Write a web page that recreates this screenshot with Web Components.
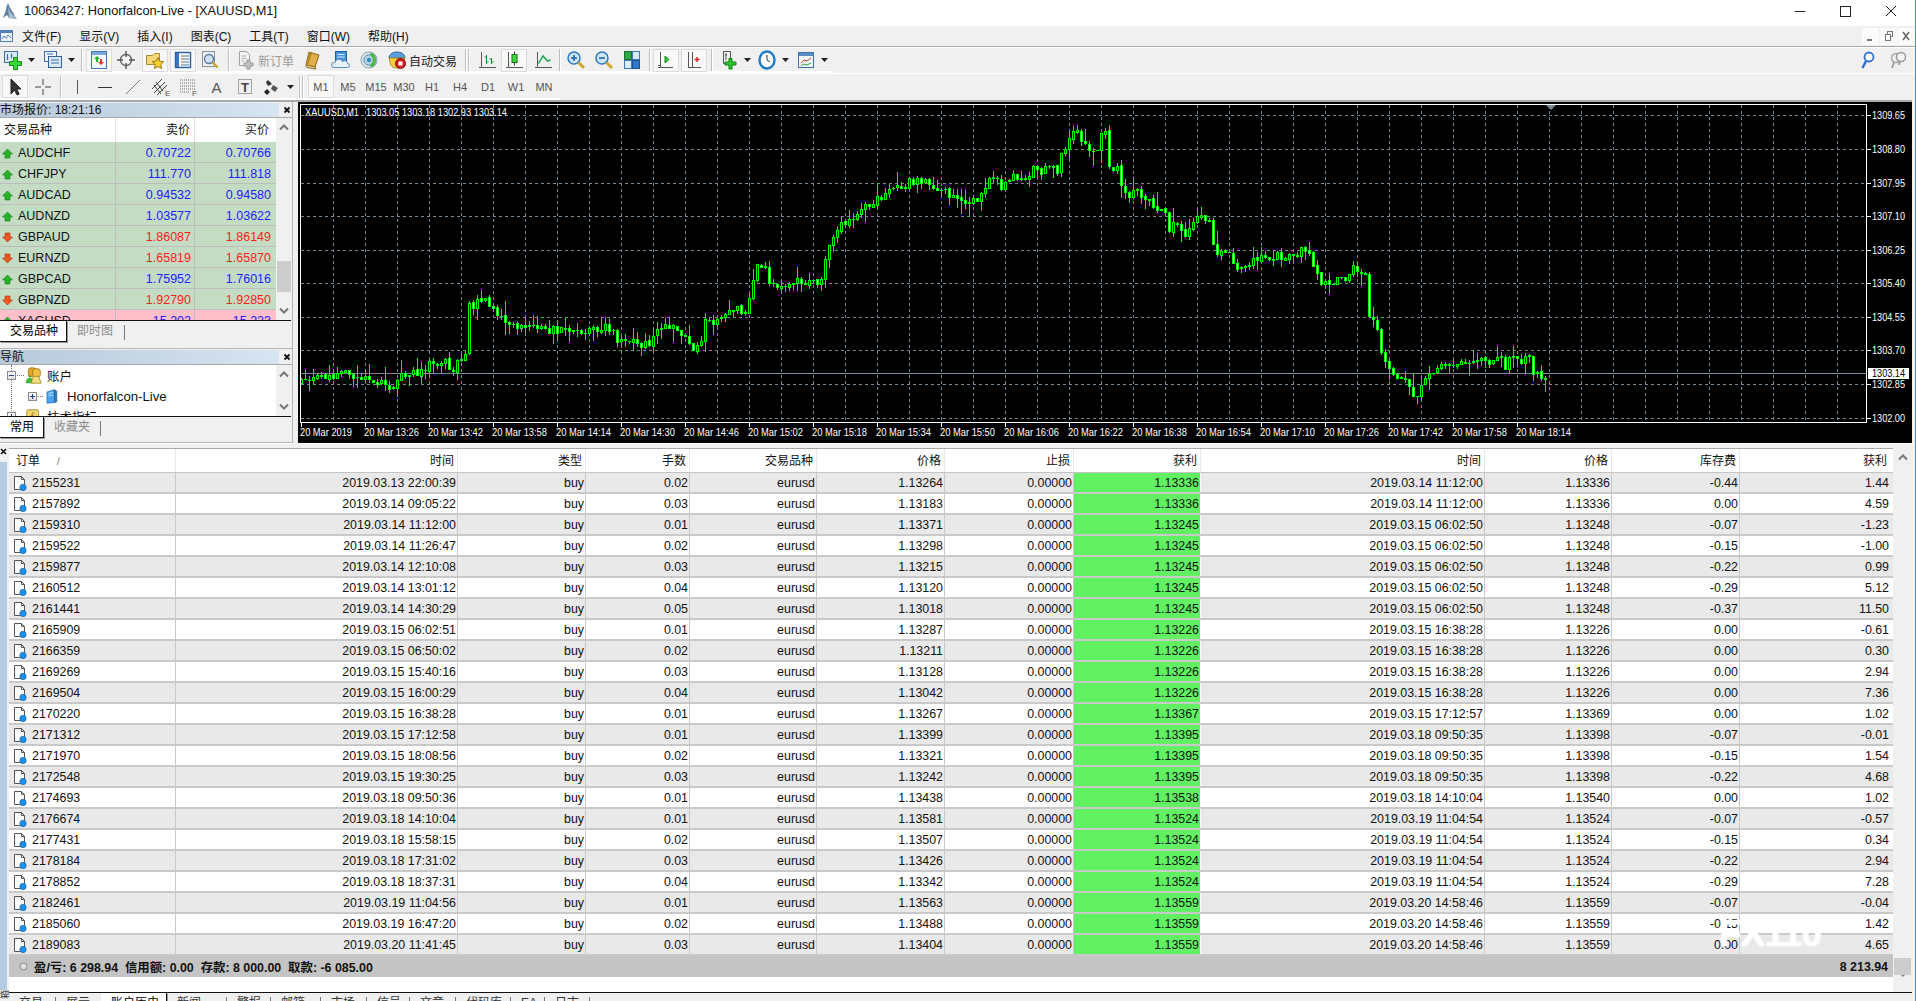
<!DOCTYPE html>
<html lang="zh">
<head>
<meta charset="utf-8">
<title>10063427: Honorfalcon-Live - [XAUUSD,M1]</title>
<style>
  html, body { margin: 0; padding: 0; width: 1916px; height: 1001px; overflow: hidden; background: #f0f0f0; }
  body { font: 12px "Liberation Sans", "Noto Sans CJK SC", sans-serif; color: #000; display: flex; flex-direction: column; box-sizing: border-box; border-right: 1px solid #3f8fb0; }
  .main { display: flex; height: 343px; flex: none; }
</style>
</head>
<body>
<title-bar></title-bar>
<menu-bar></menu-bar>

<tool-row band="833">
  <tool-btn icon="newchart" w="26"></tool-btn><tool-btn icon="drop" w="10"></tool-btn><tool-btn w="4"></tool-btn>
  <tool-btn icon="profiles" w="26"></tool-btn><tool-btn icon="drop" w="10"></tool-btn><tool-btn icon="sep" w="10"></tool-btn>
  <tool-btn icon="market" w="26" active></tool-btn><tool-btn icon="target" w="28"></tool-btn><tool-btn w="2"></tool-btn>
  <tool-btn icon="fav" w="26" active></tool-btn><tool-btn w="2"></tool-btn>
  <tool-btn icon="navi" w="26" active></tool-btn><tool-btn icon="tester" w="28"></tool-btn><tool-btn icon="sep" w="8"></tool-btn>
  <tool-btn icon="neworder" w="67" label="新订单" muted></tool-btn>
  <tool-btn icon="book" w="28"></tool-btn><tool-btn icon="cloud" w="28"></tool-btn><tool-btn icon="signal" w="28"></tool-btn>
  <tool-btn icon="auto" w="78" label="自动交易"></tool-btn><tool-btn icon="grip" w="12"></tool-btn>
  <tool-btn icon="bars" w="28"></tool-btn><tool-btn icon="candle" w="26" active></tool-btn><tool-btn w="2"></tool-btn><tool-btn icon="line" w="28"></tool-btn>
  <tool-btn icon="sep" w="5"></tool-btn>
  <tool-btn icon="zoomin" w="28"></tool-btn><tool-btn icon="zoomout" w="28"></tool-btn><tool-btn icon="tile" w="28"></tool-btn>
  <tool-btn icon="sep" w="7"></tool-btn>
  <tool-btn icon="shift" w="26" active></tool-btn><tool-btn w="2"></tool-btn><tool-btn icon="scroll" w="26" active></tool-btn><tool-btn icon="sep" w="8"></tool-btn>
  <tool-btn icon="indicator" w="28"></tool-btn><tool-btn icon="drop" w="8"></tool-btn><tool-btn w="2"></tool-btn>
  <tool-btn icon="clock" w="28"></tool-btn><tool-btn icon="drop" w="8"></tool-btn><tool-btn w="3"></tool-btn>
  <tool-btn icon="template" w="28"></tool-btn><tool-btn icon="drop" w="8"></tool-btn>
  <tool-btn icon="find" w="26" style="margin-left:auto"></tool-btn><tool-btn icon="talk" w="32"></tool-btn><tool-btn w="2"></tool-btn>
</tool-row>

<tool-row band="560">
  <tool-btn w="2"></tool-btn><tool-btn icon="cursor" w="26" active></tool-btn>
  <tool-btn icon="cross" w="29"></tool-btn><tool-btn icon="sep" w="6"></tool-btn>
  <tool-btn icon="vline" w="28"></tool-btn><tool-btn icon="hline" w="28"></tool-btn><tool-btn icon="trend" w="28"></tool-btn>
  <tool-btn icon="channel" w="28"></tool-btn><tool-btn icon="fibo" w="28"></tool-btn><tool-btn icon="atext" w="28"></tool-btn>
  <tool-btn icon="ttext" w="28"></tool-btn><tool-btn icon="arrows" w="26"></tool-btn><tool-btn icon="drop" w="10"></tool-btn>
  <tool-btn icon="grip" w="12"></tool-btn><tool-btn w="1"></tool-btn>
  <tool-btn label="M1" w="26" active></tool-btn>
  <tool-btn label="M5" w="28"></tool-btn><tool-btn label="M15" w="28"></tool-btn><tool-btn label="M30" w="28"></tool-btn>
  <tool-btn label="H1" w="28"></tool-btn><tool-btn label="H4" w="28"></tool-btn><tool-btn label="D1" w="28"></tool-btn>
  <tool-btn label="W1" w="28"></tool-btn><tool-btn label="MN" w="28"></tool-btn>
</tool-row>

<div class="main">
  <side-panels></side-panels>
  <price-chart></price-chart>
</div>

<trade-history></trade-history>

<script>
  // toolbar + tree icons, all on a 20x20 box
  const ICONS = {
    newchart: `<rect x="1.5" y="1.5" width="13" height="11" fill="#dbe8f8" stroke="#3f6fa8"/><path d="M4.5 4v6M3.5 8h2M8.5 3.5v5M7.5 6h2" stroke="#3f6fa8" fill="none"/><path d="M10.5 7.5h4v4h4v4h-4v4h-4v-4h-4v-4h4z" fill="#37d637" stroke="#178a17"/>`,
    profiles: `<rect x="1.5" y="1.5" width="12" height="10" fill="#eef3fa" stroke="#3f6fa8"/><rect x="5.5" y="6.5" width="13" height="11" fill="#dbe8f8" stroke="#2f5f9c"/><path d="M4 4h6M8 10h8M8 13h8" stroke="#3f6fa8"/>`,
    market: `<rect x="2.5" y="1.5" width="15" height="17" fill="#f5f9ff" stroke="#3f78b8"/><path d="M3 2h14v3H3z" fill="#7fa8d8"/><path d="M8 6l3 3H9v3H7V9H5z" fill="#20b020"/><path d="M12 15l-3-3h2V9h2v3h2z" fill="#e8402a"/>`,
    target: `<circle cx="10" cy="10" r="5.5" fill="#f4f4f4" stroke="#666" stroke-width="1.4"/><path d="M10 1v6M10 13v6M1 10h6M13 10h6" stroke="#555" stroke-width="1.4"/>`,
    fav: `<path d="M1.5 5.5h6l2-2h5v11h-13z" fill="#f6d777" stroke="#a88a2a"/><path d="M13 7.5l1.8 3.7 4 .5-3 2.8.8 4-3.6-2-3.6 2 .8-4-3-2.8 4-.5z" fill="#f8d030" stroke="#9a7a10"/>`,
    navi: `<rect x="2.5" y="2.5" width="15" height="15" fill="#f5f9ff" stroke="#2a5f9e" stroke-width="1.4"/><path d="M3 3h3v14H3z" fill="#3a78c0"/><path d="M8 6h8M8 9h8M8 12h8M8 15h8" stroke="#5a7aa0"/><path d="M4 6h1M4 10h1M4 14h1" stroke="#e03030"/>`,
    tester: `<rect x="2.5" y="1.5" width="12" height="15" fill="#eef0f2" stroke="#8a9098"/><circle cx="9" cy="9" r="4.5" fill="#cfe2f3" stroke="#5a7a98" stroke-width="1.3"/><path d="M12.5 12.5l5 5" stroke="#c9a227" stroke-width="2.4"/>`,
    neworder: `<path d="M3.5 1.5h7l3 3v11h-10z" fill="#f3f3f3" stroke="#a0a0a0"/><path d="M5.5 6h5M5.5 8.500h5M5.5 11h3" stroke="#b0b0b0"/><path d="M11 10h3v3h3v3h-3v3h-3v-3H8v-3h3z" fill="#c0c0c0" stroke="#989898"/>`,
    book: `<path d="M6 2l10 3-4 12-9-2z" fill="#e2b04a" stroke="#8a6414"/><path d="M3 15l1 2.500 9 1.500-1-2z" fill="#f5e7c0" stroke="#8a6414"/><path d="M6 2l3 1-4 12.600-2-.6z" fill="#b98624"/>`,
    cloud: `<rect x="4.500" y="1.500" width="11" height="12" fill="#4a94dc" stroke="#1f5fa8"/><path d="M6.500 4.500h7M6.500 7h7" stroke="#d8ecff"/><path d="M3 17.500a2.500 2.500 0 0 1 0-5h1a4 4 0 0 1 7.500-1 3 3 0 0 1 5 2 2 2 0 0 1 0 4z" fill="#e8f2fb" stroke="#5a8cbc"/>`,
    signal: `<circle cx="10" cy="10" r="8" fill="#dfe8ee" stroke="#8aa0b0"/><circle cx="10" cy="10" r="5.200" fill="#b8d4e4" stroke="#5a90b0"/><circle cx="10" cy="10" r="2.200" fill="#3f88b8"/><path d="M12 2.500a8 8 0 0 1 0 15l-1-3a5 5 0 0 0 0-9z" fill="#4cb84c"/>`,
    auto: `<path d="M2 8c0-4 4-6 8-6s8 2 8 6z" fill="#5aa0dc" stroke="#2f6aa0"/><path d="M2.500 8h15c0 6-3 10-8 10s-7-4-7-10z" fill="#f6d040" stroke="#a88a20"/><circle cx="13.500" cy="13.500" r="5" fill="#d81e1e" stroke="#7a1010"/><rect x="11.500" y="11.500" width="4" height="4" fill="#fff"/>`,
    bars: `<path d="M4.500 2v15.500H19M2 17.500h2" stroke="#555" fill="none"/><path d="M9.500 5v9M7.500 7h2M9.500 12h2M14.500 8v6M12.500 9h2M14.500 12h2" stroke="#0f8f3a" fill="none"/>`,
    candle: `<path d="M4.500 2v15.500H19M2 17.500h2" stroke="#555" fill="none"/><path d="M10.500 1.500v14" stroke="#333"/><rect x="8" y="4.500" width="5" height="8" fill="#3ad83a" stroke="#136f13"/>`,
    line: `<path d="M4.500 2v15.500H19M2 17.500h2" stroke="#555" fill="none"/><path d="M5.500 13.500L10 6l4.500 5 3-1" stroke="#0f9f4a" stroke-width="1.400" fill="none"/>`,
    zoomin: `<circle cx="8" cy="8" r="6" fill="#cfe6fa" stroke="#2f78c0" stroke-width="1.500"/><path d="M5 8h6M8 5v6" stroke="#1f5fa8" stroke-width="1.600"/><path d="M12.500 12.500l5.500 5.500" stroke="#d0a828" stroke-width="3"/>`,
    zoomout: `<circle cx="8" cy="8" r="6" fill="#cfe6fa" stroke="#2f78c0" stroke-width="1.500"/><path d="M5 8h6" stroke="#1f5fa8" stroke-width="1.600"/><path d="M12.500 12.500l5.500 5.500" stroke="#d0a828" stroke-width="3"/>`,
    tile: `<rect x="2.500" y="1.500" width="7" height="8" fill="#2fa84a" stroke="#1a7030"/><rect x="10.500" y="1.500" width="7" height="8" fill="#dceaf8" stroke="#3f78b8"/><rect x="2.500" y="10.500" width="7" height="8" fill="#dceaf8" stroke="#3f78b8"/><rect x="10.500" y="10.500" width="7" height="8" fill="#2f78c8" stroke="#1f4f90"/>`,
    shift: `<path d="M4.500 2v15.500H17M2 15.500h2M2 17.500h2" stroke="#555" fill="none"/><path d="M9 6l4 3.500L9 13z" fill="#38c838" stroke="#178a17"/>`,
    scroll: `<path d="M4.500 2v15.500H17M8.500 2v15.500" stroke="#555" fill="none"/><path d="M13 7v5M10.500 9.500h5" stroke="#d02020" stroke-width="1.400"/>`,
    indicator: `<path d="M4.500 1.500h7v12h-7z" fill="#f2f2f2" stroke="#555"/><path d="M7 3v7M6 5h2" stroke="#555"/><path d="M10 8.500h3v3.500h4v3h-4v4h-3v-4H6v-3h4z" fill="#28c828" stroke="#128012"/>`,
    clock: `<ellipse cx="10" cy="10" rx="7.500" ry="8.500" fill="#fff" stroke="#1f78c8" stroke-width="2.400"/><path d="M10 5v5l3 2" stroke="#333" fill="none"/>`,
    template: `<rect x="2.500" y="2.500" width="15" height="15" fill="#f2f6fb" stroke="#3f6fa8"/><path d="M3 3h14v3H3z" fill="#5a8cc8"/><path d="M5 13l3-3 3 1 4-3" stroke="#d04020" fill="none"/><path d="M5 16l3-2 3 1 4-2" stroke="#20a040" fill="none"/>`,
    find: `<circle cx="11" cy="7" r="4.500" fill="#fff" stroke="#2f6fd0" stroke-width="1.800"/><path d="M8 11l-3.500 7" stroke="#2f6fd0" stroke-width="2.400"/>`,
    talk: `<circle cx="9" cy="8" r="4.500" fill="#eee" stroke="#a8a8a8" stroke-width="1.500"/><circle cx="14" cy="7" r="4.500" fill="#f6f6f6" stroke="#989898" stroke-width="1.500"/><path d="M7 12l-2 6M13 11l-1 4" stroke="#a0a0a0" stroke-width="2"/>`,
    cursor: `<path d="M6 2v15l3.500-4 2.500 5 2.200-1-2.500-5H16z" fill="#333" stroke="#222"/>`,
    cross: `<path d="M10 2v6M10 12v6M2 10h6M12 10h6" stroke="#444"/>`,
    vline: `<path d="M10.500 3v14" stroke="#555"/>`,
    hline: `<path d="M3 10.500h14" stroke="#333"/>`,
    trend: `<path d="M3 17L17 3" stroke="#777"/>`,
    channel: `<path d="M1 12L11 2M3 16L14 5M6 18L16 8M5 5l7 9M3 8l7 9" stroke="#444" fill="none"/><text x="14" y="18.500" font-size="8" font-family="Liberation Sans" fill="#555">E</text>`,
    fibo: `<path d="M1 3h15M1 6h15M1 9h15M1 12h15M1 15h10" stroke="#666" stroke-dasharray="1 1"/><text x="13" y="18.500" font-size="8" font-family="Liberation Sans" fill="#555">F</text>`,
    atext: `<text x="4.500" y="16" font-size="15" font-family="Liberation Sans" fill="#555">A</text>`,
    ttext: `<rect x="3.500" y="2.500" width="13" height="14" fill="none" stroke="#555" stroke-dasharray="1 1"/><text x="6" y="15" font-size="13" font-weight="bold" font-family="Liberation Sans" fill="#444">T</text>`,
    arrows: `<path d="M6 3l4 4-4 2-2-4z" fill="#333"/><path d="M11 8l5 3-3 4-4-3z" fill="#555"/><path d="M5 12l3 3-3 3-3-3z" fill="#222"/>`,
    accounts: `<circle cx="6" cy="10" r="2.500" fill="#3fb83f"/><path d="M1 19c0-5 2-6 5-6s5 1 5 6z" fill="#3fb83f"/><rect x="4" y="1" width="9" height="10" rx="3" fill="#e0a828" stroke="#a0741a"/><rect x="9" y="2" width="9" height="10" rx="3" fill="#f0c040" stroke="#a0741a"/><path d="M7 19l3-8h6l3 8z" fill="#f4dc80" stroke="#a88a20"/>`,
    server: `<path d="M4 4l10-3v17l-10 1z" fill="#49a4ea" stroke="#1f6fb8"/><path d="M14 1l3 2v14l-3 1z" fill="#2f78c0" stroke="#1f5f9f"/><path d="M6 6l6-1.500M6 9l6-1" stroke="#d6eeff"/>`,
    fbook: `<rect x="2" y="2" width="14" height="15" rx="2" fill="#f2d46e" stroke="#a8882a"/><text x="6.500" y="14" font-size="11" font-style="italic" font-family="Liberation Serif" fill="#8a6a10">f</text>`
  };

  const iconSvg = (name, size = 20) =>
    `<svg width="${size}" height="${size}" viewBox="0 0 20 20" aria-hidden="true">${ICONS[name] || ""}</svg>`;

  const chevron = (up) =>
    `<svg width="12" height="8" viewBox="0 0 12 8"><path d="${up ? "M2 6.500L6 2.500l4 4" : "M2 1.500L6 5.500l4-4"}" fill="none" stroke="#777" stroke-width="2"/></svg>`;

  class TitleBar extends HTMLElement {
    connectedCallback() {
      if (!this.shadowRoot) this.attachShadow({ mode: "open" });
      this.shadowRoot.innerHTML = `
        <style>
          :host { display: flex; align-items: center; height: 26px; flex: none; background: #fff; font: 12.750px "Liberation Sans", sans-serif; color: #111; }
          .logo { margin: 0 7px 4px 3px; }
          .title { flex: 1; margin-bottom: 5px; }
          .btns { display: flex; margin-bottom: 4px; margin-right: 2px; }
          .btns svg { width: 45px; height: 14px; display: block; }
        </style>
        <svg class="logo" width="14" height="17" viewBox="0 0 14 17"><path d="M5 0c-1 3-2 4-2 7L0 15l4-3 2 3 8 1c-3-3-3-6-5-8C7 5 6 3 5 0z" fill="#5f7f9f"/><path d="M5 3c1 4 2 6 5 9l3 4-7-1z" fill="#a9bdd0"/></svg>
        <span class="title">10063427: Honorfalcon-Live - [XAUUSD,M1]</span>
        <div class="btns">
          <svg viewBox="0 0 45 14"><path d="M17 7.500h10" stroke="#222"/></svg>
          <svg viewBox="0 0 45 14"><rect x="17.500" y="2.500" width="10" height="10" fill="none" stroke="#222"/></svg>
          <svg viewBox="0 0 45 14"><path d="M18 2l10 10M28 2L18 12" stroke="#222" fill="none"/></svg>
        </div>
      `;
    }
  }
  customElements.define("title-bar", TitleBar);

  class MenuBar extends HTMLElement {
    connectedCallback() {
      if (!this.shadowRoot) this.attachShadow({ mode: "open" });
      const items = ["文件(F)", "显示(V)", "插入(I)", "图表(C)", "工具(T)", "窗口(W)", "帮助(H)"];
      this.shadowRoot.innerHTML = `
        <style>
          :host { display: flex; align-items: center; height: 20px; flex: none; background: #f0f0f0; color: #111; font: 12px "Liberation Sans", "Noto Sans CJK SC", sans-serif; }
          .doc { width: 22px; flex: none; display: flex; }
          nav { display: flex; gap: 18px; flex: 1; padding-bottom: 2px; }
          .mdi { display: flex; gap: 1px; }
          .mdi svg { display: block; background: #fbfbfb; }
        </style>
        <div class="doc"><svg width="14" height="14" viewBox="0 0 14 14"><rect x="0.500" y="1.500" width="12" height="11" fill="#eef4fc" stroke="#4f80b8"/><path d="M1 2h11v2H1z" fill="#4f80b8"/><path d="M2 10l2-3 2 2 2-3 3 3" fill="none" stroke="#4f80b8"/></svg></div>
        <nav>${items.map((m) => `<span>${m}</span>`).join("")}</nav>
        <div class="mdi">
          <svg width="17" height="17" viewBox="0 0 17 17"><rect x="5" y="11" width="5" height="2" fill="#777"/></svg>
          <svg width="17" height="17" viewBox="0 0 17 17"><rect x="7.500" y="3.500" width="5" height="5" fill="none" stroke="#777"/><rect x="5.500" y="6.500" width="5" height="6" fill="#fbfbfb" stroke="#777"/></svg>
          <svg width="17" height="17" viewBox="0 0 17 17"><path d="M5 4l6 8M11 4l-6 8" stroke="#666" stroke-width="1.500"/></svg>
        </div>
      `;
    }
  }
  customElements.define("menu-bar", MenuBar);

  class ToolRow extends HTMLElement {
    connectedCallback() {
      if (!this.shadowRoot) this.attachShadow({ mode: "open" });
      this.shadowRoot.innerHTML = `
        <style>
          :host {
            display: flex; align-items: center; height: 27px; flex: none; box-sizing: border-box;
            border-top: 1px solid #a9a9a9; padding-top: 1px; padding-bottom: 1px;
            background:
              linear-gradient(#fff, #fff) 0 100% / ${this.getAttribute("band")}px 2px no-repeat,
              linear-gradient(#fff, #fff) 0 0 / 100% 1px no-repeat,
              #f0f0f0;
          }
          :host(:nth-of-type(2)) { border-top: 0; }
        </style>
        <slot></slot>
      `;
    }
  }
  customElements.define("tool-row", ToolRow);

  class ToolBtn extends HTMLElement {
    connectedCallback() {
      if (!this.shadowRoot) this.attachShadow({ mode: "open" });
      const icon = this.getAttribute("icon");
      const label = this.getAttribute("label");
      const w = this.getAttribute("w");
      let face = "";
      if (icon === "drop") face = `<svg width="7" height="4" viewBox="0 0 7 4"><path d="M0 0h7L3.500 4z" fill="#222"/></svg>`;
      else if (icon === "sep") face = `<i class="sep"></i>`;
      else if (icon === "grip") face = `<i class="sep"></i><i class="sep"></i>`;
      else if (icon) face = iconSvg(icon);
      this.shadowRoot.innerHTML = `
        <style>
          :host { display: flex; flex: none; align-items: center; justify-content: center; box-sizing: border-box; width: ${w}px; height: 23px; gap: 2px; font: 12px "Liberation Sans", "Noto Sans CJK SC", sans-serif; color: #222; }
          :host([active]) { background: #f8f8f8; border: 1px solid #dcdcdc; }
          :host([muted]) { color: #9a9a9a; }
          :host([label][icon]) { justify-content: flex-start; padding-left: 4px; }
          .sep { width: 1px; height: 22px; background: #bdbdbd; box-shadow: 1px 0 #fff; }
          span { white-space: nowrap; }
          :host([label]:not([icon])) span { color: #555; font-size: 11px; }
          svg { flex: none; display: block; }
        </style>
        ${face}${label ? `<span>${label}</span>` : ""}
      `;
    }
  }
  customElements.define("tool-btn", ToolBtn);

  class PanelHead extends HTMLElement {
    connectedCallback() {
      if (!this.shadowRoot) this.attachShadow({ mode: "open" });
      this.shadowRoot.innerHTML = `
        <style>
          :host { display: flex; align-items: center; height: 14px; flex: none; font: 12px/14px "Liberation Sans", "Noto Sans CJK SC", sans-serif; color: #111; }
          .t { width: 279px; flex: none; height: 14px; background: linear-gradient(90deg, #b7c9db, #d7e4f1); white-space: nowrap; }
          svg { margin-left: 4px; }
        </style>
        <div class="t"><slot></slot></div>
        <svg width="9" height="9" viewBox="0 0 9 9"><path d="M1.500 1.500l5 5M6.500 1.500l-5 5" stroke="#111" stroke-width="1.800"/></svg>
      `;
    }
  }
  customElements.define("panel-head", PanelHead);

  class TabStrip extends HTMLElement {
    connectedCallback() {
      if (!this.shadowRoot) this.attachShadow({ mode: "open" });
      this.shadowRoot.innerHTML = `
        <style>
          :host { display: flex; flex: none; box-sizing: border-box; border-top: 1px solid #111; background: #f0f0f0; overflow: hidden; }
        </style>
        <slot></slot>
      `;
    }
  }
  customElements.define("tab-strip", TabStrip);

  class TabItem extends HTMLElement {
    connectedCallback() {
      if (!this.shadowRoot) this.attachShadow({ mode: "open" });
      const w = this.getAttribute("w");
      this.shadowRoot.innerHTML = `
        <style>
          :host { display: block; flex: none; box-sizing: border-box; width: ${w}px; height: 21px; padding-left: 10px; font: 12px/21px "Liberation Sans", "Noto Sans CJK SC", sans-serif; color: #333; white-space: nowrap; position: relative; }
          :host([muted]) { color: #8c8c8c; }
          :host([active]) { background: #fff; color: #000; border-right: 1px solid #111; border-bottom: 1px solid #111; box-shadow: 1px 1px 0 #999; }
          :host([sep])::after { content: ""; position: absolute; right: 0; top: 4px; height: 15px; width: 1px; background: #777; }
        </style>
        <slot></slot>
      `;
    }
  }
  customElements.define("tab-item", TabItem);

  class ScrollRail extends HTMLElement {
    connectedCallback() {
      if (!this.shadowRoot) this.attachShadow({ mode: "open" });
      this.shadowRoot.innerHTML = `
        <style>
          :host { display: flex; flex-direction: column; align-items: center; justify-content: space-between; flex: none; box-sizing: border-box; background: #f0f0f0; padding: 5px 0; position: relative; }
          .thumb { position: absolute; left: 1px; right: 1px; background: #cdcdcd; }
        </style>
        ${chevron(true)}
        <div class="thumb" style="top:${this.getAttribute("thumb-top") || 0}px;height:${this.getAttribute("thumb") || 0}px"></div>
        ${chevron(false)}
      `;
    }
  }
  customElements.define("scroll-rail", ScrollRail);

  class QuoteRow extends HTMLElement {
    connectedCallback() {
      if (!this.shadowRoot) this.attachShadow({ mode: "open" });
      const dir = this.getAttribute("dir-tick");
      const up = dir === "up";
      const colour = this.hasAttribute("pink") ? "#1a1aff" : up ? "#2222ff" : "#ff1a1a";
      this.shadowRoot.innerHTML = `
        <style>
          :host { display: grid; grid-template-columns: 116px 79px 80px; height: 21px; flex: none; box-sizing: border-box; background: ${this.hasAttribute("pink") ? "#ffc0cb" : "#c4dcc4"}; border-bottom: 1px solid #bdbdbd; font: 12.500px/22px "Liberation Sans", sans-serif; }
          div { box-sizing: border-box; border-right: 1px solid #bdbdbd; white-space: nowrap; height: 20px; }
          .sym { display: flex; align-items: center; gap: 5px; padding-left: 2px; padding-top: 2px; line-height: 18px; color: #111; }
          .n { text-align: right; padding-right: 3px; color: ${colour}; }
          .n:last-child { border-right: 0; padding-right: 4px; }
          svg { flex: none; }
        </style>
        <div class="sym">
          <svg width="11" height="11" viewBox="0 0 11 11"><path d="${up ? "M5.500 1l5 5H8v4H3V6H.5z" : "M5.500 10l5-5H8V1H3v4H.5z"}" fill="${up ? "#27b327" : "#f0561e"}" stroke="${up ? "#167a16" : "#a83210"}" stroke-width=".6"/></svg>
          <span>${this.getAttribute("sym")}</span>
        </div>
        <div class="n">${this.getAttribute("bid")}</div>
        <div class="n">${this.getAttribute("ask")}</div>
      `;
    }
  }
  customElements.define("quote-row", QuoteRow);

  class SidePanels extends HTMLElement {
    connectedCallback() {
      if (!this.shadowRoot) this.attachShadow({ mode: "open" });
      const quotes = [
        ["AUDCHF", "0.70722", "0.70766", "up"],
        ["CHFJPY", "111.770", "111.818", "up"],
        ["AUDCAD", "0.94532", "0.94580", "up"],
        ["AUDNZD", "1.03577", "1.03622", "up"],
        ["GBPAUD", "1.86087", "1.86149", "down"],
        ["EURNZD", "1.65819", "1.65870", "down"],
        ["GBPCAD", "1.75952", "1.76016", "up"],
        ["GBPNZD", "1.92790", "1.92850", "down"]
      ];
      this.shadowRoot.innerHTML = `
        <style>
          :host { display: flex; flex-direction: column; width: 298px; flex: none; box-sizing: border-box; height: 343px; border-top: 2px solid #a9a9a9; background: #f0f0f0; font: 12px "Liberation Sans", "Noto Sans CJK SC", sans-serif; }
          .wrap { width: 293px; box-sizing: border-box; border-right: 1px solid #b5b5b5; display: flex; flex-direction: column; flex: 1; border-bottom: 1px solid #b5b5b5; }
          panel-head { margin-top: 1px; }
          .rule { height: 1px; background: #a9a9a9; flex: none; }
          .market { display: flex; height: 202px; flex: none; overflow: hidden; }
          .quotes { width: 276px; flex: none; display: flex; flex-direction: column; }
          .head { display: grid; grid-template-columns: 116px 79px 80px; height: 24px; flex: none; background: #fff; line-height: 24px; font-size: 12px; color: #111; }
          .head div { padding: 0 4px; border-right: 1px solid #e4e4e4; }
          .head .r { text-align: right; padding-right: 4px; }
          .head .r:last-child { border-right: 0; padding-right: 6px; }
          scroll-rail { width: 16px; height: 100%; }
          tab-strip { height: 25px; margin-right: 1px; }
          .gap { height: 3px; flex: none; border-bottom: 1px solid #b5b5b5; }
          .tree { display: flex; height: 51px; flex: none; overflow: hidden; background: #fff; }
          .nodes { width: 276px; flex: none; color: #111; position: relative; }
          .node { display: flex; align-items: center; height: 20px; white-space: nowrap; }
          .node.n1 { margin-top: 1px; }
          .box { width: 9px; height: 9px; box-sizing: border-box; border: 1px solid #8a8a8a; background: linear-gradient(#fff, #dcdcdc); flex: none; position: relative; }
          .box::before { content: ""; position: absolute; left: 1px; right: 1px; top: 3px; height: 1px; background: #2a3f8a; }
          .box.plus::after { content: ""; position: absolute; top: 1px; bottom: 1px; left: 3px; width: 1px; background: #2a3f8a; }
          .dots { width: 7px; flex: none; border-top: 1px dotted #777; margin: 0 1px; }
          .n1 .dots { width: 5px; }
          .node svg { flex: none; }
          .n0 { padding-left: 7px; }
          .n1 { padding-left: 28px; }
          .lbl { margin-left: 5px; font-size: 12.500px; }
          .vline { position: absolute; left: 11px; top: 0; height: 50px; border-left: 1px dotted #777; }
          .tree scroll-rail { height: 51px; }
        </style>
        <div class="wrap">
          <panel-head>市场报价: 18:21:16</panel-head>
          <div class="rule"></div>
          <div class="market">
            <div class="quotes">
              <div class="head"><div>交易品种</div><div class="r">卖价</div><div class="r">买价</div></div>
              ${quotes.map((q) => `<quote-row sym="${q[0]}" bid="${q[1]}" ask="${q[2]}" dir-tick="${q[3]}"></quote-row>`).join("")}
              <quote-row sym="XAGUSD" bid="15.202" ask="15.223" dir-tick="up" pink></quote-row>
            </div>
            <scroll-rail thumb-top="143" thumb="31"></scroll-rail>
          </div>
          <tab-strip>
            <tab-item w="67" active>交易品种</tab-item>
            <tab-item w="58" muted sep>即时图</tab-item>
          </tab-strip>
          <div class="gap"></div>
          <panel-head>导航</panel-head>
          <div class="rule"></div>
          <div class="tree">
            <div class="nodes">
              <i class="vline"></i>
              <div class="node n0"><i class="box"></i><i class="dots"></i>${iconSvg("accounts", 17)}<span class="lbl">账户</span></div>
              <div class="node n1"><i class="box plus"></i><i class="dots"></i>${iconSvg("server", 15)}<span class="lbl" style="margin-left:8px;font-size:13.200px">Honorfalcon-Live</span></div>
              <div class="node n0"><i class="box plus"></i><i class="dots"></i>${iconSvg("fbook", 17)}<span class="lbl">技术指标</span></div>
            </div>
            <scroll-rail></scroll-rail>
          </div>
          <tab-strip>
            <tab-item w="44" active>常用</tab-item>
            <tab-item w="57" muted sep>收藏夹</tab-item>
          </tab-strip>
        </div>
      `;
    }
  }
  customElements.define("side-panels", SidePanels);

  // hand-read close prices (x, y in page pixels), bars get interpolated between them
  const PATH = [
    [301,383],[325,377],[341,371],[357,377],[373,379],[389,389],[397,383],[405,372],[417,372],[429,365],[445,363],[453,367],[457,360],[465,350],
    [469,307],[473,307],[481,299],[485,298],[489,310],[497,313],[509,320],[513,325],[529,325],[545,330],[565,330],[585,333],[593,327],[613,327],
    [617,338],[625,338],[633,336],[641,345],[653,340],[661,324],[669,325],[685,335],[693,347],[701,337],[705,322],[721,317],[729,310],[745,310],
    [749,295],[753,280],[757,263],[765,263],[769,283],[793,283],[805,282],[819,283],[825,262],[831,235],[840,225],[855,214],[870,205],[892,189],
    [905,183],[923,181],[935,187],[947,195],[960,197],[978,202],[987,185],[996,171],[1001,185],[1013,175],[1025,180],[1033,170],[1041,175],[1045,165],
    [1057,173],[1061,153],[1069,137],[1073,128],[1077,128],[1085,147],[1097,147],[1101,135],[1105,135],[1109,163],[1117,170],[1121,187],[1129,197],
    [1137,188],[1141,198],[1153,205],[1157,210],[1165,208],[1169,227],[1177,223],[1185,240],[1189,225],[1193,218],[1201,217],[1209,223],[1217,257],
    [1221,247],[1229,253],[1237,268],[1253,260],[1269,255],[1293,258],[1301,248],[1309,250],[1313,263],[1321,285],[1329,285],[1333,282],[1345,277],
    [1353,268],[1357,268],[1365,275],[1369,317],[1377,330],[1381,352],[1385,358],[1393,373],[1405,375],[1409,390],[1417,395],[1421,382],[1425,380],
    [1433,375],[1445,365],[1457,360],[1473,360],[1480,358],[1489,363],[1497,355],[1505,365],[1513,357],[1521,360],[1529,358],[1533,372],[1537,375],[1545,375]
  ];

  class PriceChart extends HTMLElement {
    connectedCallback() {
      if (!this.shadowRoot) this.attachShadow({ mode: "open" });
      this.render();
    }

    candles() {
      let seed = 110;
      const rnd = () => {
        seed = (seed * 16807) % 2147483647;
        return seed / 2147483647;
      };
      const at = (x) => {
        for (let i = 1; i < PATH.length; i++) {
          if (x <= PATH[i][0]) {
            const a = PATH[i - 1];
            const b = PATH[i];
            return a[1] + ((b[1] - a[1]) * (x - a[0])) / (b[0] - a[0]);
          }
        }
        return PATH[PATH.length - 1][1];
      };
      let lime = "";
      let black = "";
      let white = "";
      let prev = at(301);
      for (let x = 301; x <= 1545; x += 4) {
        const close = Math.round(at(x) + (rnd() - 0.5) * 9);
        const open = Math.round(prev + (rnd() - 0.5) * 2);
        const top = Math.min(open, close);
        const bottom = Math.max(open, close);
        const hi = top - Math.round(rnd() * rnd() * 15);
        const lo = bottom + Math.round(rnd() * rnd() * 15);
        lime += `M${x} ${hi}h1v${lo - hi + 1}h-1z`;
        lime += `M${x - 1} ${top}h3v${bottom - top + 1}h-3z`;
        if (bottom - top >= 2) {
          const inner = `M${x} ${top + 1}h1v${bottom - top - 1}h-1z`;
          if (close < open) black += inner;
          else white += inner;
        }
        prev = close;
      }
      return { lime, black, white };
    }

    render() {
      const c = this.candles();
      const hy = [115, 149, 183, 216, 250, 283, 317, 350, 384, 418];
      const prices = ["1309.65", "1308.80", "1307.95", "1307.10", "1306.25", "1305.40", "1304.55", "1303.70", "1302.85", "1302.00"];
      let grid = "";
      for (let x = 333; x <= 1837; x += 32) grid += `M${x + 0.5} 105V422`;
      for (const y of hy) grid += `M301 ${y + 0.5}H1867`;
      let ticks = "";
      for (let x = 301; x <= 1530; x += 64) ticks += `M${x + 0.5} 423v4`;
      for (const y of hy) ticks += `M1867 ${y + 0.5}h4`;
      const times = ["20 Mar 2019"];
      let minutes = 13 * 60 + 26;
      for (let i = 0; i < 19; i++) {
        const h = String(Math.floor(minutes / 60));
        const m = String(minutes % 60).padStart(2, "0");
        times.push(`20 Mar ${h}:${m}`);
        minutes += 16;
      }
      const timeLabels = times
        .map((t, i) => `<text x="${i === 0 ? 300 : 364 + (i - 1) * 64}" y="436" textLength="${i === 0 ? 52 : 55}" lengthAdjust="spacingAndGlyphs">${t}</text>`)
        .join("");
      const priceLabels = prices
        .map((p, i) => `<text x="1872" y="${hy[i] + 4}" textLength="33" lengthAdjust="spacingAndGlyphs">${p}</text>`)
        .join("");
      this.shadowRoot.innerHTML = `
        <style>
          :host { display: block; flex: 1; height: 343px; box-sizing: border-box; border-top: 2px solid #a9a9a9; margin-right: 3px; background: #000; }
          svg { display: block; }
          text { font: 11px "Liberation Sans", sans-serif; fill: #fff; }
        </style>
        <svg width="1614" height="341" viewBox="298 102 1614 341">
          <path d="${grid}" stroke="#778899" stroke-dasharray="3 3" fill="none"/>
          <path d="M301 373.500H1867" stroke="#778899" fill="none"/>
          <path d="${c.lime}" fill="#00ff00"/>
          <path d="${c.black}" fill="#000"/>
          <path d="${c.white}" fill="#fff"/>
          <rect x="300.500" y="104.500" width="1566" height="318" fill="none" stroke="#fff"/>
          <path d="${ticks}" stroke="#fff" fill="none"/>
          <path d="M1546 105h10l-5 5z" fill="#778899"/>
          <text x="305" y="116" textLength="54" lengthAdjust="spacingAndGlyphs">XAUUSD,M1</text>
          <text x="366" y="116" textLength="141" lengthAdjust="spacingAndGlyphs">1303.05 1303.18 1302.93 1303.14</text>
          ${timeLabels}
          ${priceLabels}
          <rect x="1868" y="368" width="41" height="11" fill="#fff"/>
          <text x="1872" y="377" textLength="33" lengthAdjust="spacingAndGlyphs" style="fill:#000">1303.14</text>
        </svg>
      `;
    }
  }
  customElements.define("price-chart", PriceChart);

  const T1 = "2019.03.14 11:12:00", T2 = "2019.03.15 06:02:50", T3 = "2019.03.15 16:38:28";
  const T4 = "2019.03.18 09:50:35", T5 = "2019.03.19 11:04:54", T6 = "2019.03.20 14:58:46";
  const TRADES = [
    ["2155231", "2019.03.13 22:00:39", "0.02", "1.13264", "1.13336", T1, "1.13336", "-0.44", "1.44"],
    ["2157892", "2019.03.14 09:05:22", "0.03", "1.13183", "1.13336", T1, "1.13336", "0.00", "4.59"],
    ["2159310", "2019.03.14 11:12:00", "0.01", "1.13371", "1.13245", T2, "1.13248", "-0.07", "-1.23"],
    ["2159522", "2019.03.14 11:26:47", "0.02", "1.13298", "1.13245", T2, "1.13248", "-0.15", "-1.00"],
    ["2159877", "2019.03.14 12:10:08", "0.03", "1.13215", "1.13245", T2, "1.13248", "-0.22", "0.99"],
    ["2160512", "2019.03.14 13:01:12", "0.04", "1.13120", "1.13245", T2, "1.13248", "-0.29", "5.12"],
    ["2161441", "2019.03.14 14:30:29", "0.05", "1.13018", "1.13245", T2, "1.13248", "-0.37", "11.50"],
    ["2165909", "2019.03.15 06:02:51", "0.01", "1.13287", "1.13226", T3, "1.13226", "0.00", "-0.61"],
    ["2166359", "2019.03.15 06:50:02", "0.02", "1.13211", "1.13226", T3, "1.13226", "0.00", "0.30"],
    ["2169269", "2019.03.15 15:40:16", "0.03", "1.13128", "1.13226", T3, "1.13226", "0.00", "2.94"],
    ["2169504", "2019.03.15 16:00:29", "0.04", "1.13042", "1.13226", T3, "1.13226", "0.00", "7.36"],
    ["2170220", "2019.03.15 16:38:28", "0.01", "1.13267", "1.13367", "2019.03.15 17:12:57", "1.13369", "0.00", "1.02"],
    ["2171312", "2019.03.15 17:12:58", "0.01", "1.13399", "1.13395", T4, "1.13398", "-0.07", "-0.01"],
    ["2171970", "2019.03.15 18:08:56", "0.02", "1.13321", "1.13395", T4, "1.13398", "-0.15", "1.54"],
    ["2172548", "2019.03.15 19:30:25", "0.03", "1.13242", "1.13395", T4, "1.13398", "-0.22", "4.68"],
    ["2174693", "2019.03.18 09:50:36", "0.01", "1.13438", "1.13538", "2019.03.18 14:10:04", "1.13540", "0.00", "1.02"],
    ["2176674", "2019.03.18 14:10:04", "0.01", "1.13581", "1.13524", T5, "1.13524", "-0.07", "-0.57"],
    ["2177431", "2019.03.18 15:58:15", "0.02", "1.13507", "1.13524", T5, "1.13524", "-0.15", "0.34"],
    ["2178184", "2019.03.18 17:31:02", "0.03", "1.13426", "1.13524", T5, "1.13524", "-0.22", "2.94"],
    ["2178852", "2019.03.18 18:37:31", "0.04", "1.13342", "1.13524", T5, "1.13524", "-0.29", "7.28"],
    ["2182461", "2019.03.19 11:04:56", "0.01", "1.13563", "1.13559", T6, "1.13559", "-0.07", "-0.04"],
    ["2185060", "2019.03.19 16:47:20", "0.02", "1.13488", "1.13559", T6, "1.13559", "-0.15", "1.42"],
    ["2189083", "2019.03.20 11:41:45", "0.03", "1.13404", "1.13559", T6, "1.13559", "0.00", "4.65"]
  ];

  class TradeHistory extends HTMLElement {
    connectedCallback() {
      if (!this.shadowRoot) this.attachShadow({ mode: "open" });
      this.render();
    }

    row(t, i) {
      const doc = `<svg width="14" height="15" viewBox="0 0 14 15"><path d="M1.500.5h7l3 3v10h-10z" fill="#fff" stroke="#555"/><path d="M8.500.5v3h3" fill="none" stroke="#555"/><circle cx="10" cy="11.500" r="3.200" fill="#1f8fe8" stroke="#0f5fa8" stroke-width=".6"/></svg>`;
      return `
        <div class="row ${i % 2 ? "" : "odd"}">
          <div class="id">${doc}<span>${t[0]}</span></div>
          <div>${t[1]}</div>
          <div>buy</div>
          <div>${t[2]}</div>
          <div>eurusd</div>
          <div>${t[3]}</div>
          <div>0.00000</div>
          <div class="tp">${t[4]}</div>
          <div>${t[5]}</div>
          <div>${t[6]}</div>
          <div>${t[7]}</div>
          <div class="last">${t[8]}</div>
        </div>`;
    }

    render() {
      const heads = ["时间", "类型", "手数", "交易品种", "价格", "止损", "获利", "时间", "价格", "库存费", "获利"];
      this.shadowRoot.innerHTML = `
        <style>
          :host { display: flex; flex: none; height: 558px; position: relative; overflow: hidden; font: 12.400px "Liberation Sans", "Noto Sans CJK SC", sans-serif; color: #111; box-shadow: inset 0 1px #fff; }
          .strip { width: 9px; flex: none; display: flex; flex-direction: column; padding-top: 5px; box-sizing: border-box; }
          .strip svg { flex: none; }
          .strip i { flex: none; width: 7px; height: 528px; margin-top: 7px; background: #b4cbe4; }
          .strip b { font: 9px/9px "Noto Sans CJK SC", sans-serif; color: #333; transform: rotate(-90deg); width: 9px; }
          .body { flex: 1; display: flex; flex-direction: column; min-width: 0; margin-top: 5px; margin-right: 3px; }
          .top { display: flex; flex: none; height: 544px; }
          .table { width: 1884px; flex: none; background: #fff; display: flex; flex-direction: column; }
          .row, .header { display: grid; grid-template-columns: 167px 282px 128px 104px 127px 128px 129px 127px 284px 127px 128px 153px; flex: none; }
          .header { height: 25px; box-sizing: border-box; border-top: 1px solid #a9a9a9; border-bottom: 1px solid #c4c4c4; line-height: 25px; font-size: 12px; }
          .header div { text-align: right; padding-right: 3px; border-right: 1px solid #e8e8e8; box-sizing: border-box; height: 23px; }
          .header .first { text-align: left; padding-left: 7px; display: flex; gap: 17px; }
          .header .first em { font-style: normal; color: #777; font-size: 10px; }
          .header .end { padding-right: 6px; border-right: 0; }
          .row { height: 21px; box-sizing: border-box; border-bottom: 2px solid #c9c9c9; line-height: 21px; white-space: nowrap; }
          .row.odd { background: #e9e9e9; }
          .row div { height: 19px; text-align: right; padding-right: 1px; border-right: 1px solid #c9c9c9; box-sizing: border-box; }
          .row .id { display: flex; align-items: center; gap: 5px; padding-left: 4px; padding-top: 2px; line-height: 15px; }
          .row .tp { background: #62f162; border-right-color: #fff; }
          .row .last { padding-right: 4px; border-right: 0; }
          .total { display: flex; flex: none; justify-content: space-between; align-items: center; height: 21px; background: #c4c4c4; font-weight: bold; padding: 0 5px 0 10px; box-sizing: border-box; }
          .total span:first-child { display: flex; align-items: center; word-spacing: 0; white-space: pre; }
          .total svg { margin-right: 6px; }
          .pad { flex: 1; }
          scroll-rail { flex: 1; padding: 5px 0 14px; }
          tab-strip { height: 20px; margin-top: 0; flex: none; }
          .mark { position: absolute; left: 1719px; top: 472px; font: bold 37px/37px "Liberation Sans", sans-serif; color: rgba(255,255,255,.92); text-shadow: 0 0 2px #fff; letter-spacing: -1px; }
        </style>
        <div class="strip">
          <svg width="7" height="7" viewBox="0 0 7 7"><path d="M1 1l5 5M6 1L1 6" stroke="#111" stroke-width="1.600"/></svg>
          <i></i>
          <b>箱</b>
        </div>
        <div class="body">
          <div class="top">
            <div class="table">
              <div class="header">
                <div class="first"><span>订单</span><em>/</em></div>
                ${heads.map((h, i) => `<div class="${i === heads.length - 1 ? "end" : ""}">${h}</div>`).join("")}
              </div>
              ${TRADES.map((t, i) => this.row(t, i)).join("")}
              <div class="total">
                <span><svg width="9" height="9" viewBox="0 0 9 9"><circle cx="4.500" cy="4.500" r="3.500" fill="#e0e0e0" stroke="#8a8a8a"/></svg>盈/亏: 6 298.94  信用额: 0.00  存款: 8 000.00  取款: -6 085.00</span>
                <span>8 213.94</span>
              </div>
              <div class="pad"></div>
            </div>
            <scroll-rail thumb-top="510" thumb="17"></scroll-rail>
          </div>
          <tab-strip>
            <tab-item w="47" sep>交易</tab-item>
            <tab-item w="45">展示</tab-item>
            <tab-item w="66" active>账户历史</tab-item>
            <tab-item w="60" sep>新闻</tab-item>
            <tab-item w="44" sep>警报</tab-item>
            <tab-item w="50" sep>邮箱</tab-item>
            <tab-item w="46" sep>市场</tab-item>
            <tab-item w="43" sep>信号</tab-item>
            <tab-item w="46" sep>文章</tab-item>
            <tab-item w="55" sep>代码库</tab-item>
            <tab-item w="34" sep>EA</tab-item>
            <tab-item w="45" sep>日志</tab-item>
          </tab-strip>
        </div>
        <div class="mark">FX110</div>
      `;
    }
  }
  customElements.define("trade-history", TradeHistory);
</script>
</body>
</html>
